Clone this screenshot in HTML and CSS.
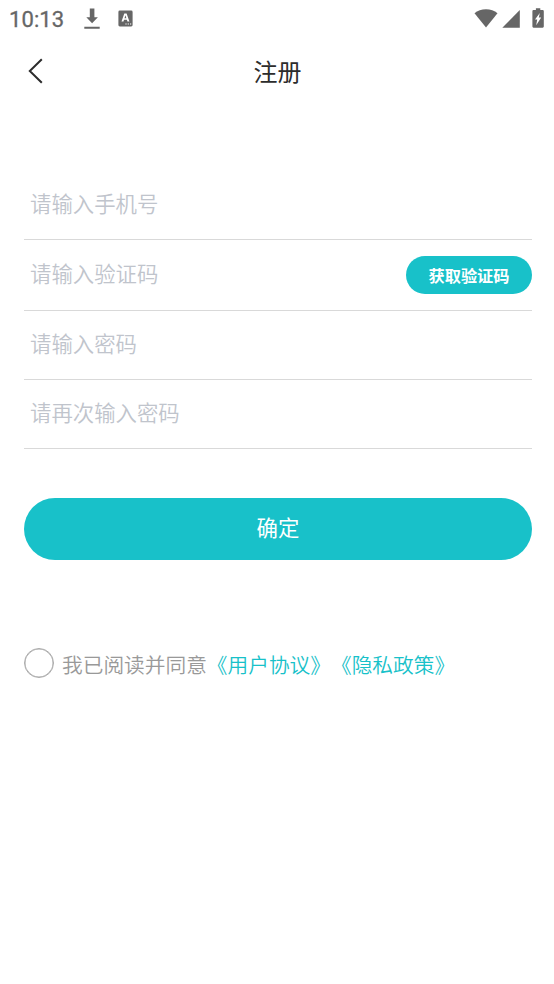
FILE: index.html
```html
<!DOCTYPE html>
<html lang="zh-CN">
<head>
<meta charset="utf-8">
<title>注册</title>
<link rel="stylesheet" href="styles.css">
</head>
<body>
<div class="status">
  <span class="clock">10:13</span>
  <svg class="download" width="16" height="22" viewBox="0 0 16 22"><path d="M5.8 0.6h4.6v8.6h3.5L8.1 15.3 2.3 9.2h3.5zM0.3 18.7h15.4v2H0.3z"/></svg>
  <svg class="keyboard" width="15" height="17" viewBox="0 0 15 17"><rect x="0.4" y="0.5" width="14.2" height="16" rx="1.4"/><path class="cut" d="M6.3 3.4h2.3l2.8 8H9.4l-.5-1.6H6l-.5 1.6H3.5zM6.5 8.3h1.9l-.95-3.1zM7.4 13.4h1.2v1.1H7.4zM9.7 13.4h1.2v1.1H9.7zM12 13.4h1.2v1.1h-1.2z"/></svg>
  <span class="spacer"></span>
  <svg class="wifi" width="24" height="19" viewBox="0 0 24 19"><path d="M0.5 4.2Q5.2.2 12 .2t11.5 4L12 18.4z"/></svg>
  <svg class="signal" width="18" height="18" viewBox="0 0 18 18"><path d="M17.8 0v17.8H0.3z"/></svg>
  <svg class="battery" width="12" height="20" viewBox="0 0 12 20"><path d="M3.9.2h4.4v1.9h2.4q1.1 0 1.1 1.1v15.4q0 1.1-1.1 1.1H1.5q-1.1 0-1.1-1.1V3.2q0-1.1 1.1-1.1h2.4z"/><path class="cut" d="M7.8 5 3 11.5h2.2l-1 5.8 5-7.7H6.8z"/></svg>
</div>
<header class="header">
  <svg class="back" width="16" height="26" viewBox="0 0 16 26"><path d="M13.8 1.2 1.8 13l12 11.8"/></svg>
  <h1 class="title">注册</h1>
</header>
<form class="form">
  <label class="field"><input class="input" type="tel" placeholder="请输入手机号"></label>
  <div class="field field-code"><input class="input" type="text" placeholder="请输入验证码"><button class="code" type="button">获取验证码</button></div>
  <label class="field"><input class="input" type="password" placeholder="请输入密码"></label>
  <label class="field"><input class="input" type="password" placeholder="请再次输入密码"></label>
  <button class="submit" type="button">确定</button>
  <div class="agree"><span class="radio"></span><span class="terms">我已阅读并同意<a class="link">《用户协议》</a><a class="link">《隐私政策》</a></span></div>
</form>
</body>
</html>
```
FILE: styles.css
```css
* { box-sizing: border-box; }
body {
  margin: 0;
  min-height: 984px;
  background: #fff;
  color: #2c2c2c;
  font-family: "Noto Sans CJK SC", sans-serif;
}
.status {
  display: flex;
  align-items: flex-start;
  height: 40px;
  padding: 8px 10px 0 9px;
  fill: #666;
}
.status svg { flex: none; }
.clock {
  width: 75px;
  font: 400 22px/24px Roboto, sans-serif;
  letter-spacing: 0.1px;
  color: #666;
  -webkit-text-stroke: 0.3px #666;
}
.cut { fill: #fff; }
.keyboard { margin: 2px 0 0 18px; }
.spacer { flex: 1; }
.wifi { margin: 1px 4px 0 0; }
.signal { margin: 2px 12px 0 0; }
.header {
  display: grid;
  grid-template-columns: 28px 1fr 28px;
  align-items: center;
  height: 64px;
  padding: 0 26px 0 27px;
}
.back {
  fill: none;
  stroke: #2c2c2c;
  stroke-width: 2;
  margin: -3px 0 0 1px;
}
.title {
  margin: -2px 0 0;
  font-size: 24px;
  line-height: 36px;
  font-weight: 400;
  text-align: center;
}
.form { padding: 67px 22px 0 24px; }
.field {
  display: flex;
  align-items: center;
  height: 69px;
  border-bottom: 1px solid #d9d9d9;
}
.field-code { height: 71px; }
.input {
  flex: 1;
  min-width: 0;
  height: 40px;
  margin: 0;
  padding: 0 0 6px 6px;
  border: 0;
  outline: 0;
  background: transparent;
  font: 350 21.4px/32px "Noto Sans CJK SC", sans-serif;
}
.input::placeholder { color: #c0c4cc; opacity: 1; }
.code, .submit {
  border: 0;
  padding: 0;
  background: #18c1c9;
  color: #fff;
  font-family: inherit;
}
.code {
  width: 126px;
  height: 38px;
  border-radius: 19px;
  font-size: 16.2px;
  line-height: 38px;
  font-weight: 700;
}
.submit {
  display: block;
  width: 100%;
  height: 62px;
  margin-top: 49px;
  padding-bottom: 4px;
  border-radius: 31px;
  font-size: 21.4px;
  line-height: 58px;
}
.agree {
  display: flex;
  align-items: center;
  margin-top: 88px;
  height: 30px;
}
.radio {
  width: 30px;
  height: 30px;
  margin-right: 8px;
  border: 1.5px solid #aaa;
  border-radius: 50%;
  box-shadow: inset 0 0 0 0.5px #aaa;
}
.terms {
  margin-top: 2px;
  font-size: 20.7px;
  font-weight: 350;
  line-height: 30px;
  color: #999;
  white-space: nowrap;
  text-spacing-trim: space-all;
}
.link { color: #18c1c9; }
```
